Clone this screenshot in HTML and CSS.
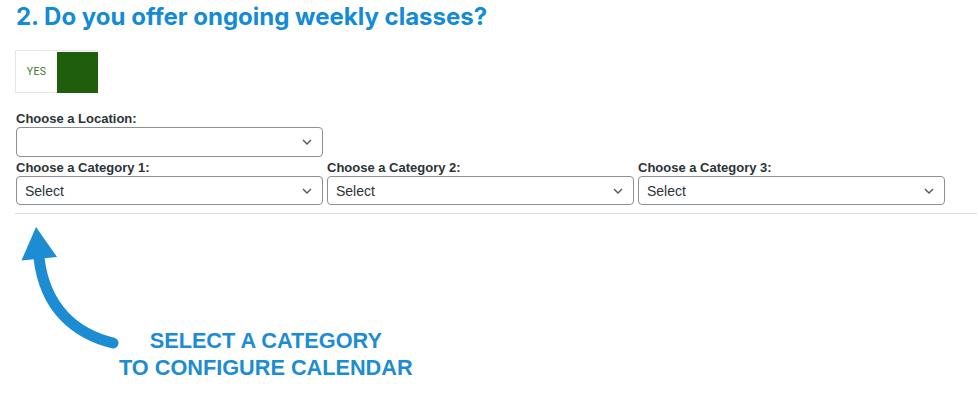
FILE: index.html
```html
<!DOCTYPE html>
<html lang="en">
<head>
<meta charset="utf-8">
<title>Weekly classes</title>
<link rel="stylesheet" href="styles.css">
</head>
<body>
<div class="page">
  <h2 class="question">2. Do you offer ongoing weekly classes?</h2>
  <div class="toggle">
    <span class="toggle-label">YES</span>
    <span class="toggle-knob"></span>
  </div>

  <div class="field">
    <label class="field-label">Choose a Location:</label>
    <select class="select"><option></option></select>
  </div>

  <div class="categories">
    <div class="field">
      <label class="field-label">Choose a Category 1:</label>
      <select class="select"><option>Select</option></select>
    </div>
    <div class="field">
      <label class="field-label">Choose a Category 2:</label>
      <select class="select"><option>Select</option></select>
    </div>
    <div class="field">
      <label class="field-label">Choose a Category 3:</label>
      <select class="select"><option>Select</option></select>
    </div>
  </div>

  <hr class="divider">

  <div class="hint">
    <svg class="hint-arrow" width="110" height="130" viewBox="15 222 110 130">
      <path d="M113 342 C76 333 45 308 39 257" fill="none" stroke="#1c8cd3" stroke-width="11" stroke-linecap="round"/>
      <path d="M36 226 L21.5 259.5 L57 256 Z" fill="#1c8cd3"/>
    </svg>
    <div class="hint-text">SELECT A CATEGORY<br>TO CONFIGURE CALENDAR</div>
  </div>
</div>
</body>
</html>
```

FILE: styles.css
```css
* { box-sizing: border-box; }

body {
  margin: 0;
  background: #ffffff;
  font-family: "Liberation Sans", Arial, sans-serif;
}

.page {
  padding: 0 0 0 15px;
}

.question {
  margin: 3px 0 0 1px;
  font-family: Inter, "Liberation Sans", sans-serif;
  font-weight: 700;
  font-size: 24px;
  line-height: 28px;
  color: #138bd6;
}

.toggle {
  margin-top: 19px;
  display: inline-flex;
  width: 83px;
  height: 43px;
  border: 1px solid #e6e6e6;
  border-right: 0;
}

.toggle-label {
  width: 41px;
  display: flex;
  align-items: center;
  justify-content: center;
  font-family: Roboto, "Liberation Sans", sans-serif;
  font-size: 10.5px;
  color: #3b7a2c;
  letter-spacing: 0.3px;
}

.toggle-knob {
  width: 41px;
  height: 41px;
  margin-top: 1px;
  background: #1f5e0d;
}

.field {
  display: flex;
  flex-direction: column;
  width: 308px;
}

.page > .field {
  margin-top: 20px;
}

.field-label {
  font-size: 13px;
  line-height: 12px;
  font-weight: 700;
  color: #2c3338;
  margin-left: 1px;
  margin-bottom: 2px;
}

.select {
  appearance: none;
  -webkit-appearance: none;
  margin: 0 0 0 1px;
  width: 307px;
  height: 30px;
  border: 1px solid #8c8f94;
  border-radius: 4px;
  background: #fff url("data:image/svg+xml;utf8,<svg xmlns='http://www.w3.org/2000/svg' width='10' height='6' viewBox='0 0 10 6'><path d='M1 1 L5 5 L9 1' fill='none' stroke='%2350575e' stroke-width='1.4'/></svg>") no-repeat right 10px center;
  padding: 0 24px 0 8px;
  font-family: "Liberation Sans", Arial, sans-serif;
  font-size: 14px;
  color: #2c3338;
}

.categories {
  display: flex;
  gap: 3px;
  margin-top: 5px;
}

.categories .select {
  height: 29px;
}

.divider {
  margin: 8px 0 0 0;
  border: 0;
  border-top: 1px solid #dcdcde;
  width: 962px;
}

.hint {
  display: flex;
  align-items: flex-start;
  margin-top: 9px;
}

.hint-arrow {
  display: block;
  flex: none;
}

.hint-text {
  margin: 104px 0 0 -6px;
  font-family: "Liberation Sans", Arial, sans-serif;
  font-weight: 700;
  font-size: 21.7px;
  line-height: 27px;
  text-align: center;
  color: #1c8cd3;
}
```
